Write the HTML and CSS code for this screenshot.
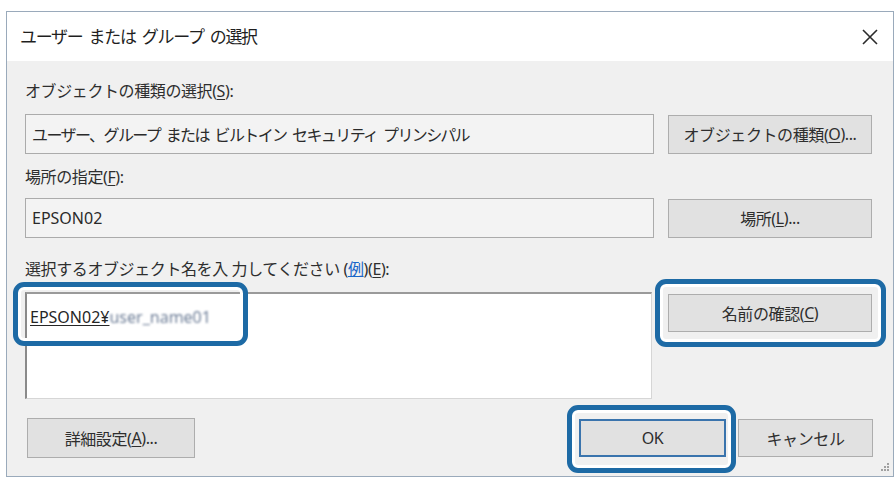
FILE: index.html
```html
<!DOCTYPE html>
<html lang="ja">
<head>
<meta charset="utf-8">
<title>ユーザー または グループ の選択</title>
<link rel="stylesheet" href="styles.css">
</head>
<body>
<div class="dialog">
  <div class="titlebar">
    <span class="title">ユーザー または グループ の選択</span>
    <svg class="close" width="18" height="18" viewBox="0 0 18 18"><path d="M2 2 L16 16 M16 2 L2 16" stroke="#2b2b2b" stroke-width="1.6" fill="none"/></svg>
  </div>
  <div class="body">
    <div class="label">オブジェクトの種類の選択(<u>S</u>):</div>
    <div class="row">
      <div class="field kana">ユーザー、グループ または ビルトイン セキュリティ プリンシパル</div>
      <div class="btn">オブジェクトの種類(<u>O</u>)...</div>
    </div>
    <div class="label label2">場所の指定(<u>F</u>):</div>
    <div class="row row2">
      <div class="field latin">EPSON02</div>
      <div class="btn">場所(<u>L</u>)...</div>
    </div>
    <div class="label label3">選択するオブジェクト名を入 力してください (<a class="link">例</a>)(<u>E</u>):</div>
    <div class="row row3">
      <div class="input">
        <span class="resolved">EPSON02¥<span class="blur">user_name01</span></span>
        <div class="mark mark-input"></div>
      </div>
      <div class="btn btn-check">名前の確認(<u>C</u>)<div class="mark mark-check"></div></div>
    </div>
    <div class="footer">
      <div class="btn btn-adv">詳細設定(<u>A</u>)...</div>
      <div class="btn btn-ok">OK<div class="mark mark-ok"></div></div>
      <div class="btn btn-cancel">キャンセル</div>
    </div>
    <svg class="grip" width="10" height="10" viewBox="0 0 10 10"><g fill="#a0a0a0"><rect x="7" y="1" width="2" height="2"/><rect x="4" y="4" width="2" height="2"/><rect x="7" y="4" width="2" height="2"/><rect x="1" y="7" width="2" height="2"/><rect x="4" y="7" width="2" height="2"/><rect x="7" y="7" width="2" height="2"/></g></svg>
  </div>
</div>
</body>
</html>
```
FILE: styles.css
```css
* { box-sizing: border-box; }
html, body { margin: 0; padding: 0; background: #ffffff; }
body {
  font-family: "Noto Sans", "Noto Sans CJK JP", sans-serif;
  color: #2a2a2a;
  width: 896px;
  height: 479px;
  overflow: hidden;
}
.dialog {
  margin: 11px 0 0 6px;
  width: 888px;
  height: 466px;
  border: 1px solid #9aaabb;
  background: #f0f0f0;
  display: flex;
  flex-direction: column;
}
.titlebar {
  height: 49px;
  background: #ffffff;
  display: flex;
  align-items: center;
  justify-content: space-between;
  padding: 0 14px 0 13px;
}
.title {
  font-size: 17px;
  letter-spacing: -1.3px;
  word-spacing: 3px;
  color: #1f1f1f;
  line-height: 20px;
}
.close { display: block; }
.body {
  flex: 1;
  position: relative;
  padding: 20px 20px 0 18px;
}
.label {
  font-size: 16px;
  line-height: 20px;
  height: 20px;
  white-space: nowrap;
  letter-spacing: -0.4px;
  color: #2e2e2e;
}
.label u, .btn u { text-decoration-thickness: 1px; text-underline-offset: 2px; }
.label2 { margin-top: 13px; }
.label3 { margin-top: 21px; }
.link { color: #1a66c8; text-decoration: underline; }
.row {
  display: grid;
  grid-template-columns: 629px 204px;
  column-gap: 14px;
  margin-top: 13px;
  align-items: center;
}
.row2 { margin-top: 11px; }
.row3 { margin-top: 13px; align-items: start; }
.field {
  height: 40px;
  background: #f3f3f3;
  border: 1px solid #ababab;
  display: flex;
  align-items: center;
  padding-left: 6px;
  font-size: 16px;
  white-space: nowrap;
  color: #2a2a2a;
}
.kana { letter-spacing: -1.6px; word-spacing: 3px; }
.latin { font-size: 16px; }
.btn {
  position: relative;
  height: 39px;
  background: #e1e1e1;
  border: 1px solid #adadad;
  display: flex;
  align-items: center;
  justify-content: center;
  font-size: 16px;
  white-space: nowrap;
  letter-spacing: -0.4px;
  color: #2e2e2e;
}
.input {
  position: relative;
  height: 107px;
  width: 627px;
  background: #ffffff;
  border-top: 2px solid #9a9a9a;
  border-left: 2px solid #8a8a8a;
  border-right: 1px solid #d6d6d6;
  border-bottom: 1px solid #d6d6d6;
  padding: 12px 0 0 3px;
  font-size: 16px;
}
.resolved {
  text-decoration: underline;
  text-underline-offset: 2px;
  color: #262626;
  white-space: nowrap;
}
.blur {
  color: #6f7f98;
  filter: blur(1.3px);
  text-decoration: none;
  display: inline-block;
}
.btn-check { margin-top: 2px; height: 38px; }
.mark {
  position: absolute;
  border: 5px solid #1d6aa5;
  border-radius: 11px;
  box-shadow: inset 0 0 0 3px #ffffff;
  pointer-events: none;
}
.mark-input { left: -14px; top: -12px; width: 235px; height: 64px; }
.mark-check { left: -14px; top: -16px; width: 231px; height: 68px; }
.mark-ok { left: -14px; top: -16px; width: 169px; height: 68px; }
.footer {
  display: flex;
  margin-top: 19px;
  align-items: center;
}
.btn-adv { width: 168px; height: 40px; margin-left: 2px; }
.btn-ok {
  width: 147px;
  height: 38px;
  margin-left: auto;
  border: 2px solid #3a74ad;
  font-size: 16px;
}
.btn-cancel { width: 135px; height: 38px; margin-left: 12px; }
.grip { position: absolute; right: 3px; bottom: 4px; }
```
